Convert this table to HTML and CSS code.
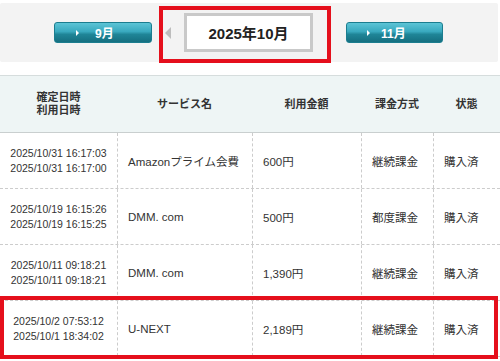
FILE: index.html
```html
<!DOCTYPE html>
<html lang="ja">
<head>
<meta charset="utf-8">
<title>利用履歴</title>
<link rel="stylesheet" href="styles.css">
</head>
<body>
<div class="nav">
  <a class="btn btn-prev"><span class="tri"></span><span class="btn-label">9月</span></a>
  <div class="current-hl">
    <span class="arrow-left"></span>
    <div class="current">2025年10月</div>
  </div>
  <a class="btn btn-next"><span class="tri"></span><span class="btn-label">11月</span></a>
</div>

<div class="table">
  <div class="row head">
    <div class="cell c-date">確定日時<br>利用日時</div>
    <div class="cell">サービス名</div>
    <div class="cell">利用金額</div>
    <div class="cell">課金方式</div>
    <div class="cell">状態</div>
  </div>
  <div class="row body">
    <div class="cell c-date"><span>2025/10/31 16:17:03</span><span>2025/10/31 16:17:00</span></div>
    <div class="cell c-svc">Amazonプライム会費</div>
    <div class="cell c-amt">600円</div>
    <div class="cell c-txt">継続課金</div>
    <div class="cell c-txt">購入済</div>
  </div>
  <div class="row body">
    <div class="cell c-date"><span>2025/10/19 16:15:26</span><span>2025/10/19 16:15:25</span></div>
    <div class="cell c-svc">DMM. com</div>
    <div class="cell c-amt">500円</div>
    <div class="cell c-txt">都度課金</div>
    <div class="cell c-txt">購入済</div>
  </div>
  <div class="row body">
    <div class="cell c-date"><span>2025/10/11 09:18:21</span><span>2025/10/11 09:18:21</span></div>
    <div class="cell c-svc">DMM. com</div>
    <div class="cell c-amt">1,390円</div>
    <div class="cell c-txt">継続課金</div>
    <div class="cell c-txt">購入済</div>
  </div>
  <div class="row body highlight">
    <div class="cell c-date"><span>2025/10/2 07:53:12</span><span>2025/10/1 18:34:02</span></div>
    <div class="cell c-svc">U-NEXT</div>
    <div class="cell c-amt">2,189円</div>
    <div class="cell c-txt">継続課金</div>
    <div class="cell c-txt">購入済</div>
  </div>
</div>
</body>
</html>
```

FILE: styles.css
```css
* { box-sizing: border-box; }
html, body { margin: 0; padding: 0; background: #fff; }
body {
  width: 500px;
  height: 361px;
  overflow: hidden;
  font-family: "Liberation Sans", "Noto Sans CJK JP", sans-serif;
  color: #333;
}

.nav {
  margin: 3px 2px 0 0;
  height: 59px;
  background: #f3f3f3;
  border-radius: 2px;
  display: flex;
  align-items: center;
}

.btn {
  display: flex;
  align-items: center;
  height: 21px;
  border-radius: 3px;
  background: linear-gradient(#5cc4d6 0%, #39a9be 45%, #1f8597 60%, #156f80 100%);
  border: 1px solid #1b7d8f;
  color: #fff;
  font-weight: bold;
  font-size: 12px;
}
.btn-prev { width: 98px; margin-left: 54px; padding-left: 21px; }
.btn-next { width: 97px; margin-left: 15px; padding-left: 20px; }
.tri {
  width: 0; height: 0;
  border-left: 3px solid #fff;
  border-top: 3px solid transparent;
  border-bottom: 3px solid transparent;
}
.btn-prev .tri { margin-right: 16px; }
.btn-next .tri { margin-right: 11px; }

.current-hl {
  align-self: flex-start;
  margin-top: 3px;
  margin-left: 7px;
  width: 172px;
  height: 57px;
  border: 4px solid #e50f1c;
  padding: 3px 14px 7px 2px;
  display: flex;
  align-items: center;
}
.arrow-left {
  width: 0; height: 0;
  border-right: 6px solid #bdbdbd;
  border-top: 6px solid transparent;
  border-bottom: 6px solid transparent;
  margin-right: 13px;
}
.current {
  width: 129px;
  height: 39px;
  border: 3px solid #c9c9c9;
  background: #fff;
  display: flex;
  align-items: center;
  justify-content: center;
  font-weight: bold;
  font-size: 15px;
  color: #222;
}

.table {
  margin-top: 13px;
  border-top: 1px solid #d6dddd;
}
.row {
  display: grid;
  grid-template-columns: 117px 135px 109px 72px 67px;
}
.head {
  height: 57px;
  background: #eef5f5;
  border-bottom: 1px solid #c9cfcf;
  font-weight: bold;
  font-size: 11px;
  line-height: 13px;
  color: #333;
}
.head .cell {
  display: flex;
  align-items: center;
  justify-content: center;
  text-align: center;
}
.body {
  height: 56px;
  border-bottom: 1px dashed #cccccc;
}
.body .cell {
  display: flex;
  align-items: center;
  padding-left: 10px;
  font-size: 11.5px;
  color: #333;
}
.body .cell + .cell { border-left: 1px dashed #cccccc; }
.body .c-date {
  flex-direction: column;
  justify-content: center;
  padding-left: 0;
  font-size: 10.5px;
  line-height: 15px;
}
.c-amt { font-size: 11px; }

.highlight { position: relative; }
.highlight::after {
  content: "";
  position: absolute;
  top: -5px;
  bottom: -3px;
  left: 0;
  right: 2px;
  border: 4px solid #e50f1c;
  pointer-events: none;
}
```
